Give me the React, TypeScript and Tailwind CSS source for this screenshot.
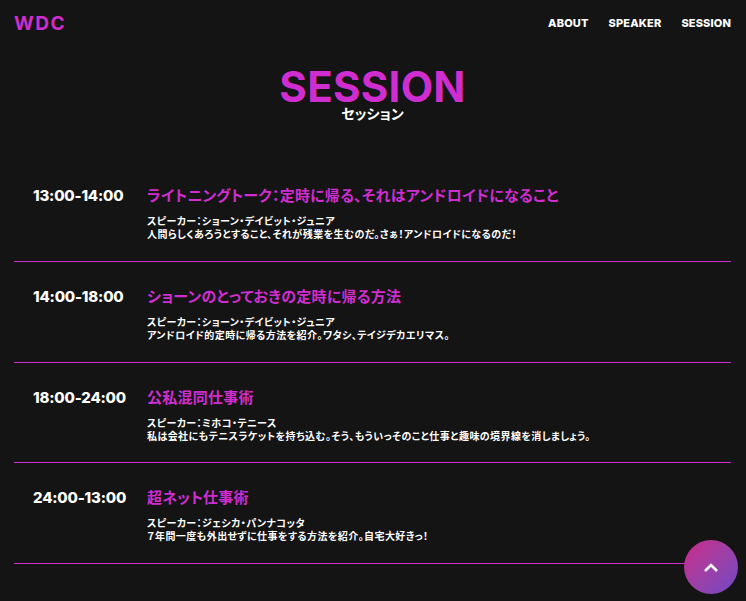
import React from "react";

const latin = "font-['Inter','Noto_Sans_CJK_JP',sans-serif] [font-feature-settings:'palt']";

const sessions = [
  {
    time: "13:00-14:00",
    title: "ライトニングトーク：定時に帰る、それはアンドロイドになること",
    speaker: "スピーカー：ショーン・デイビット・ジュニア",
    text: "人間らしくあろうとすること、それが残業を生むのだ。さぁ！アンドロイドになるのだ！",
  },
  {
    time: "14:00-18:00",
    title: "ショーンのとっておきの定時に帰る方法",
    speaker: "スピーカー：ショーン・デイビット・ジュニア",
    text: "アンドロイド的定時に帰る方法を紹介。ワタシ、テイジデカエリマス。",
  },
  {
    time: "18:00-24:00",
    title: "公私混同仕事術",
    speaker: "スピーカー：ミホコ・テニース",
    text: "私は会社にもテニスラケットを持ち込む。そう、もういっそのこと仕事と趣味の境界線を消しましょう。",
  },
  {
    time: "24:00-13:00",
    title: "超ネット仕事術",
    speaker: "スピーカー：ジェシカ・パンナコッタ",
    text: "７年間一度も外出せずに仕事をする方法を紹介。自宅大好きっ！",
  },
];

export default function App() {
  return (
    <div className={`relative h-[601px] w-full overflow-hidden bg-[#141414] pl-[14px] pr-[15px] text-white ${latin}`}>
      <header className="flex h-[47px] items-center justify-between">
        <a className="text-[19px] font-bold leading-none tracking-[1.5px] text-[#cf2dcf]">WDC</a>
        <nav className="flex gap-5 text-[11px] font-extrabold tracking-[0.15px]">
          <a>ABOUT</a>
          <a>SPEAKER</a>
          <a>SESSION</a>
        </nav>
      </header>

      <div className="mt-[21px] flex flex-col items-center">
        <h2 className="text-[42px] font-bold leading-[38px] tracking-[0.3px] text-[#cf2dcf]">SESSION</h2>
        <p className="text-[14px] font-bold leading-[16px]">セッション</p>
      </div>

      <ul className="mt-[39.33px]">
        {sessions.map((s) => (
          <li key={s.time} className="flex h-[100.67px] border-b border-[#cf2dcf] pt-[23px]">
            <div className="w-[133px] pl-[19px] text-[15px] font-extrabold leading-[24px] tracking-[-0.2px]">{s.time}</div>
            <div>
              <h3 className="text-[15px] font-bold leading-[24px] tracking-[0.23px] text-[#cf2dcf]">{s.title}</h3>
              <p className="mt-[7px] text-[10px] font-bold leading-[13px] tracking-[0.42px]">
                {s.speaker}
                <br />
                {s.text}
              </p>
            </div>
          </li>
        ))}
      </ul>

      <button className="absolute right-2 bottom-[7px] flex h-[54px] w-[54px] items-center justify-center rounded-full bg-gradient-to-br from-[#cb2288] to-[#6f45c4]">
        <svg width="14" height="9" viewBox="0 0 14 9" fill="none" stroke="#fff" strokeWidth="2.6">
          <path d="M1 8l6-6 6 6" />
        </svg>
      </button>
    </div>
  );
}
